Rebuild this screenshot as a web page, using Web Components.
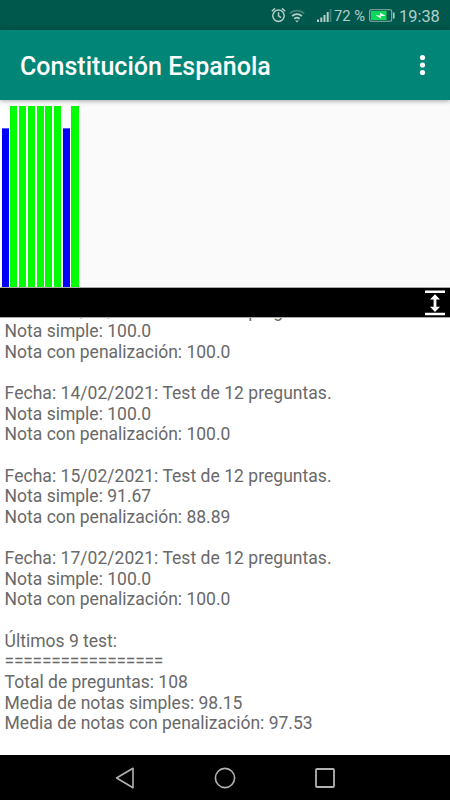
<!DOCTYPE html>
<html lang="es">
<head>
<meta charset="utf-8">
<title>Constitución Española</title>
<style>
	html, body {
		margin: 0;
		height: 100%;
	}

	body {
		font-family: Roboto, "Liberation Sans", sans-serif;
		background: #fff;
		overflow: hidden;
	}
</style>
</head>
<body>
<quiz-screen></quiz-screen>

<script>
class StatusBar extends HTMLElement {
	constructor() {
		super();
		this.attachShadow({ mode: "open" });
	}

	connectedCallback() {
		this.shadowRoot.innerHTML = `
			<style>
				:host {
					display: flex;
					align-items: center;
					justify-content: flex-end;
					height: 30px;
					box-sizing: border-box;
					padding: 2px 10px 0 0;
					background: #00574b;
					color: #b4cfca;
					flex: none;
					line-height: 20px;
					white-space: nowrap;
				}

				svg {
					display: block;
					flex: none;
				}

				.alarm { margin: 0 3px 2px 0; }
				.wifi { margin-right: 12px; }
				.signal { margin-right: 2px; }
				.percent { font-size: 14.8px; width: 31px; margin-right: 4px; }
				.battery { margin: 0 4px 1px 0; }
				.clock { font-size: 16.4px; width: 41px; margin-top: 1px; }
			</style>
			<svg class="alarm" width="15" height="16" viewBox="0 0 15 16" fill="none" stroke="currentColor" stroke-width="1.5">
				<circle cx="7.5" cy="8.7" r="5.7"/>
				<path d="M7.5 5.2v3.7l2.6 1.7M.8 4.2L4 1.4M14.2 4.2L11 1.4"/>
			</svg>
			<svg class="wifi" width="16" height="14" viewBox="0 0 16 14" fill="none" stroke="currentColor" stroke-width="1.7">
				<path d="M.8 4.6a10.3 10.3 0 0 1 14.4 0" opacity=".35"/>
				<path d="M3.1 7.2a7 7 0 0 1 9.8 0M5.3 9.8a3.9 3.9 0 0 1 5.4 0"/>
				<path d="M6.2 11.6h3.6L8 13.6z" fill="currentColor" stroke="none"/>
			</svg>
			<svg class="signal" width="15" height="14" viewBox="0 0 15 14" fill="currentColor">
				<path d="M0 10.5h2v2.5H0zM3.3 8.5h2V13h-2zM6.5 6h2v7h-2zM9.7 3h2v10h-2z"/>
				<path d="M12.6 0h1.8v13h-1.8z" opacity=".35"/>
			</svg>
			<span class="percent">72 %</span>
			<svg class="battery" width="26" height="13" viewBox="0 0 26 13">
				<rect x=".7" y=".7" width="22" height="11.6" rx="1.5" fill="none" stroke="#8fb5af" stroke-width="1.1"/>
				<rect x="2" y="2" width="15.5" height="9" fill="#0bd957"/>
				<path d="M24 3.5h1.6v6H24z" fill="#b0ccc8"/>
				<path d="M6.5 6.2l5 .2-.7-2.8 6 3.4-5.2-.1.8 2.7z" fill="#fff"/>
			</svg>
			<span class="clock">19:38</span>
		`;
	}
}

class AppBar extends HTMLElement {
	constructor() {
		super();
		this.attachShadow({ mode: "open" });
	}

	connectedCallback() {
		this.shadowRoot.innerHTML = `
			<style>
				:host {
					display: flex;
					align-items: center;
					justify-content: space-between;
					height: 70px;
					box-sizing: border-box;
					padding: 2px 20px 0;
					background: #008577;
					color: #fff;
					flex: none;
					z-index: 1;
					box-shadow: 0 1px 5px rgba(0, 0, 0, 0.35);
				}

				.title {
					margin-top: 2px;
					font-size: 25px;
					font-weight: 500;
					line-height: 30px;
					letter-spacing: 0.02px;
					white-space: nowrap;
				}

				svg {
					display: block;
					margin-bottom: 2px;
				}
			</style>
			<span class="title"><slot></slot></span>
			<svg width="15" height="22" viewBox="0 0 15 22" fill="#fff">
				<circle cx="7.5" cy="3.5" r="2.6"/>
				<circle cx="7.5" cy="11" r="2.6"/>
				<circle cx="7.5" cy="18.5" r="2.6"/>
			</svg>
		`;
	}
}

class ScoreChart extends HTMLElement {
	constructor() {
		super();
		this.attachShadow({ mode: "open" });
	}

	connectedCallback() {
		// a perfect test is green, anything lower is blue
		const bars = this.getAttribute("values").split(",").map((value) => {
			const score = Number(value);
			return `<div class="bar ${score < 100 ? "low" : ""}" style="height: ${score}%"></div>`;
		}).join("");

		this.shadowRoot.innerHTML = `
			<style>
				:host {
					display: flex;
					height: 187px;
					background: #fafafa;
					flex: none;
				}

				.plot {
					display: flex;
					align-items: flex-end;
					gap: 1.7px;
					width: 79px;
					box-sizing: border-box;
					padding: 5.5px 0.5px 0 1.6px;
					background: #fff;
				}

				.bar {
					flex: 1;
					background: #0f0;
				}

				.low {
					background: #00f;
					box-shadow: inset 0 1px #5c5cff;
				}
			</style>
			<div class="plot">${bars}</div>
		`;
	}
}

class SplitHandle extends HTMLElement {
	constructor() {
		super();
		this.attachShadow({ mode: "open" });
	}

	connectedCallback() {
		this.shadowRoot.innerHTML = `
			<style>
				:host {
					display: flex;
					justify-content: flex-end;
					align-items: center;
					height: 31px;
					box-sizing: border-box;
					padding-right: 5px;
					background: #000;
					border-top: 1px solid #aaa;
					border-bottom: 1px solid #aaa;
					flex: none;
				}

				svg {
					display: block;
				}
			</style>
			<svg width="20" height="26" viewBox="0 0 20 26" fill="#fff">
				<path d="M0 .5h20v2.6H0zM0 22.7h20v2.6H0z"/>
				<path d="M10 4.2l5 5.2h-3.6v7.4H15l-5 5.2-5-5.2h3.6V9.4H5z"/>
			</svg>
		`;
	}
}

class ResultLog extends HTMLElement {
	constructor() {
		super();
		this.attachShadow({ mode: "open" });
	}

	connectedCallback() {
		this.shadowRoot.innerHTML = `
			<style>
				:host {
					display: flex;
					flex-direction: column;
					justify-content: flex-end;
					flex: 1;
					min-height: 0;
					overflow: hidden;
					box-sizing: border-box;
					padding: 0 4.6px 21.2px;
					background: #fff;
					color: #696969;
					font-size: 17.5px;
					line-height: 20.63px;
				}

				::slotted(div) {
					min-height: 20.63px;
					flex: none;
					white-space: pre;
				}

				::slotted(.heading) {
					letter-spacing: 0.04px;
				}

				::slotted(.rule) {
					letter-spacing: -0.28px;
				}
			</style>
			<slot></slot>
		`;
	}
}

class NavBar extends HTMLElement {
	constructor() {
		super();
		this.attachShadow({ mode: "open" });
	}

	connectedCallback() {
		this.shadowRoot.innerHTML = `
			<style>
				:host {
					display: flex;
					justify-content: center;
					align-items: center;
					gap: 76px;
					height: 45px;
					background: #000;
					flex: none;
				}

				svg {
					display: block;
				}
			</style>
			<svg width="24" height="24" viewBox="0 0 24 24" fill="none" stroke="#b2b2b2" stroke-width="1.6" stroke-linejoin="round">
				<path d="M3.6 12L20 2.3v19.4z"/>
			</svg>
			<svg width="24" height="24" viewBox="0 0 24 24" fill="none" stroke="#b2b2b2" stroke-width="1.6">
				<circle cx="12" cy="12" r="9.6"/>
			</svg>
			<svg width="24" height="24" viewBox="0 0 24 24" fill="none" stroke="#b2b2b2" stroke-width="1.8">
				<rect x="3" y="3" width="18" height="18" rx="1"/>
			</svg>
		`;
	}
}

class QuizScreen extends HTMLElement {
	constructor() {
		super();
		this.attachShadow({ mode: "open" });
	}

	connectedCallback() {
		const tests = [
			{ date: "13/02/2021", simple: "100.0", penalty: "100.0" },
			{ date: "14/02/2021", simple: "100.0", penalty: "100.0" },
			{ date: "15/02/2021", simple: "91.67", penalty: "88.89" },
			{ date: "17/02/2021", simple: "100.0", penalty: "100.0" }
		];
		const entries = tests.map((test) => `
			<div class="heading">Fecha: ${test.date}: Test de 12 preguntas.</div>
			<div>Nota simple: ${test.simple}</div>
			<div>Nota con penalización: ${test.penalty}</div>
			<div></div>
		`).join("");

		this.shadowRoot.innerHTML = `
			<style>
				:host {
					display: flex;
					flex-direction: column;
					height: 100vh;
				}
			</style>
			<status-bar></status-bar>
			<app-bar>Constitución Española</app-bar>
			<score-chart values="87.7,100,100,100,100,100,100,87.7,100"></score-chart>
			<split-handle></split-handle>
			<result-log>
				${entries}
				<div>Últimos 9 test:</div>
				<div class="rule">=================</div>
				<div>Total de preguntas: 108</div>
				<div>Media de notas simples: 98.15</div>
				<div>Media de notas con penalización: 97.53</div>
			</result-log>
			<nav-bar></nav-bar>
		`;
	}
}

customElements.define("status-bar", StatusBar);
customElements.define("app-bar", AppBar);
customElements.define("score-chart", ScoreChart);
customElements.define("split-handle", SplitHandle);
customElements.define("result-log", ResultLog);
customElements.define("nav-bar", NavBar);
customElements.define("quiz-screen", QuizScreen);
</script>
</body>
</html>
